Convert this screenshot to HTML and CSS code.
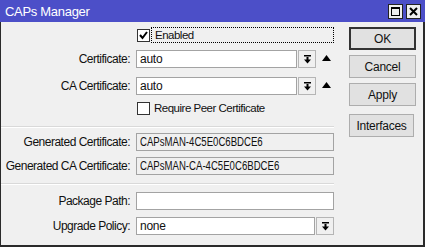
FILE: index.html
```html
<!DOCTYPE html>
<html lang="en">

<head>
    <meta charset="UTF-8">
    <title>CAPs Manager</title>
    <link rel="stylesheet" href="styles.css">
</head>

<body>
    <div class="window">
        <div class="titlebar">
            <span class="title">CAPs Manager</span>
            <div class="title-buttons">
                <span class="tbtn">
                    <svg width="11" height="11" viewBox="0 0 11 11">
                        <rect x="1.5" y="1.5" width="8" height="8" fill="none" stroke="#000" stroke-width="1"/>
                        <rect x="1" y="1" width="9" height="2" fill="#000"/>
                    </svg>
                </span>
                <span class="tbtn">
                    <svg width="11" height="11" viewBox="0 0 11 11">
                        <path d="M2 2 L9 9 M9 2 L2 9" stroke="#000" stroke-width="2"/>
                    </svg>
                </span>
            </div>
        </div>

        <div class="content">
            <div class="form">
                <div class="row check-row enabled-row">
                    <span class="checkbox">
                        <svg width="11" height="11" viewBox="0 0 11 11">
                            <path d="M2 5 L4.5 8 L9 2" fill="none" stroke="#000" stroke-width="2"/>
                        </svg>
                    </span>
                    <span class="check-label focused">Enabled</span>
                </div>

                <div class="row field cert-row">
                    <label>Certificate:</label>
                    <div class="input short">auto</div>
                    <span class="drop">
                        <svg width="9" height="9" viewBox="0 0 9 9">
                            <rect x="1" y="0" width="7" height="1.5" fill="#000"/>
                            <rect x="3.5" y="2" width="2" height="3" fill="#000"/>
                            <path d="M1 4.5 H8 L4.5 8.5 Z" fill="#000"/>
                        </svg>
                    </span>
                    <span class="up">
                        <svg width="9" height="6" viewBox="0 0 9 6"><path d="M0 6 L4.5 0 L9 6 Z" fill="#000"/></svg>
                    </span>
                </div>

                <div class="row field ca-row">
                    <label>CA Certificate:</label>
                    <div class="input short">auto</div>
                    <span class="drop">
                        <svg width="9" height="9" viewBox="0 0 9 9">
                            <rect x="1" y="0" width="7" height="1.5" fill="#000"/>
                            <rect x="3.5" y="2" width="2" height="3" fill="#000"/>
                            <path d="M1 4.5 H8 L4.5 8.5 Z" fill="#000"/>
                        </svg>
                    </span>
                    <span class="up">
                        <svg width="9" height="6" viewBox="0 0 9 6"><path d="M0 6 L4.5 0 L9 6 Z" fill="#000"/></svg>
                    </span>
                </div>

                <div class="row check-row peer-row">
                    <span class="checkbox"></span>
                    <span class="check-label">Require Peer Certificate</span>
                </div>

                <div class="separator sep-one"></div>

                <div class="row field gen-row">
                    <label>Generated Certificate:</label>
                    <div class="input wide readonly"><span class="value">CAPsMAN-4C5E0C6BDCE6</span></div>
                </div>

                <div class="row field gen-ca-row">
                    <label>Generated CA Certificate:</label>
                    <div class="input wide readonly"><span class="value">CAPsMAN-CA-4C5E0C6BDCE6</span></div>
                </div>

                <div class="separator sep-two"></div>

                <div class="row field package-row">
                    <label>Package Path:</label>
                    <div class="input wide"></div>
                </div>

                <div class="row field upgrade-row">
                    <label>Upgrade Policy:</label>
                    <div class="input medium">none</div>
                    <span class="drop">
                        <svg width="9" height="9" viewBox="0 0 9 9">
                            <rect x="1" y="0" width="7" height="1.5" fill="#000"/>
                            <rect x="3.5" y="2" width="2" height="3" fill="#000"/>
                            <path d="M1 4.5 H8 L4.5 8.5 Z" fill="#000"/>
                        </svg>
                    </span>
                </div>
            </div>

            <div class="buttons">
                <button class="btn default">OK</button>
                <button class="btn">Cancel</button>
                <button class="btn">Apply</button>
                <button class="btn narrow interfaces">Interfaces</button>
            </div>
        </div>
    </div>
</body>

</html>
```

FILE: styles.css
```css
body {
    margin: 0;
    font-family: "Liberation Sans", Arial, sans-serif;
    font-size: 12px;
    letter-spacing: -0.25px;
    color: #111;
    background-color: #f0f0f0;
}

.window {
    width: 425px;
    height: 247px;
    box-sizing: border-box;
    border: 1px solid #2a2a2a;
    border-top: none;
    border-right-width: 2px;
    border-bottom-width: 2px;
    background-color: #f0f0f0;
}

.titlebar {
    height: 22px;
    margin: 0 -2px 0 -1px;
    background-color: #4c4fc8;
    display: flex;
    align-items: center;
    justify-content: space-between;
    padding: 0 4px 0 5px;
}

.title {
    color: #fff;
    font-size: 13px;
    letter-spacing: -0.3px;
}

.title-buttons {
    display: flex;
    gap: 3px;
}

.tbtn {
    width: 13px;
    height: 13px;
    background-color: #eee;
    border: 1px solid #222;
    display: flex;
    align-items: center;
    justify-content: center;
}

.content {
    display: flex;
}

.form {
    width: 333px;
    display: flex;
    flex-direction: column;
}

.row {
    display: flex;
    align-items: center;
}

.field label {
    width: 129px;
    margin-right: 6px;
    text-align: right;
    white-space: nowrap;
    letter-spacing: -0.5px;
}

.input {
    height: 18px;
    box-sizing: border-box;
    border: 1px solid #a3a3a3;
    background-color: #fff;
    padding: 0 3px;
    line-height: 16px;
    white-space: nowrap;
}

/* the generated names are drawn in a narrower face */
.input .value {
    display: inline-block;
    letter-spacing: 0;
    transform: scaleX(0.8);
    transform-origin: left center;
}

.input.short {
    width: 161px;
}

.input.medium {
    width: 179px;
}

.input.wide {
    width: 198px;
}

.input.readonly {
    background-color: #f0f0f0;
}

.drop {
    width: 18px;
    height: 18px;
    box-sizing: border-box;
    margin-left: 1px;
    border: 1px solid #b5b5b5;
    background-color: #f0f0f0;
    display: flex;
    align-items: center;
    justify-content: center;
}

.up {
    margin-left: 6px;
    display: flex;
    margin-top: -2px;
}

.check-row {
    padding-left: 136px;
}

.checkbox {
    width: 13px;
    height: 13px;
    box-sizing: border-box;
    border: 1px solid #333;
    background-color: #fff;
    display: flex;
    align-items: center;
    justify-content: center;
}

.check-label {
    margin-left: 1px;
    padding: 0 3px;
    height: 16px;
    line-height: 16px;
    box-sizing: border-box;
    font-size: 11.5px;
    letter-spacing: -0.5px;
}

.check-label.focused {
    flex: 1;
    border: 1px dotted #000;
    line-height: 14px;
}

.separator {
    border-top: 1px solid #d9d9d9;
    border-bottom: 1px solid #fff;
    box-sizing: border-box;
    height: 2px;
}

.enabled-row {
    margin-top: 5px;
}

.cert-row {
    margin-top: 7px;
}

.ca-row {
    margin-top: 9px;
}

.peer-row {
    margin-top: 5px;
}

.sep-one {
    margin-top: 10px;
}

.gen-row {
    margin-top: 5px;
}

.gen-ca-row {
    margin-top: 6px;
}

.sep-two {
    margin-top: 8px;
}

.package-row {
    margin-top: 7px;
}

.upgrade-row {
    margin-top: 7px;
}

.buttons {
    margin-left: 15px;
    padding-top: 5px;
    display: flex;
    flex-direction: column;
    gap: 5px;
}

.btn {
    width: 67px;
    height: 23px;
    font-family: inherit;
    font-size: 12px;
    letter-spacing: -0.25px;
    color: #111;
    background-color: #e1e1e1;
    border: 1px solid #adadad;
    padding: 0;
}

.btn.default {
    border: 2px solid #333;
    outline: none;
}

.btn.narrow {
    width: 65px;
}

.interfaces {
    margin-top: 3px;
}
```
